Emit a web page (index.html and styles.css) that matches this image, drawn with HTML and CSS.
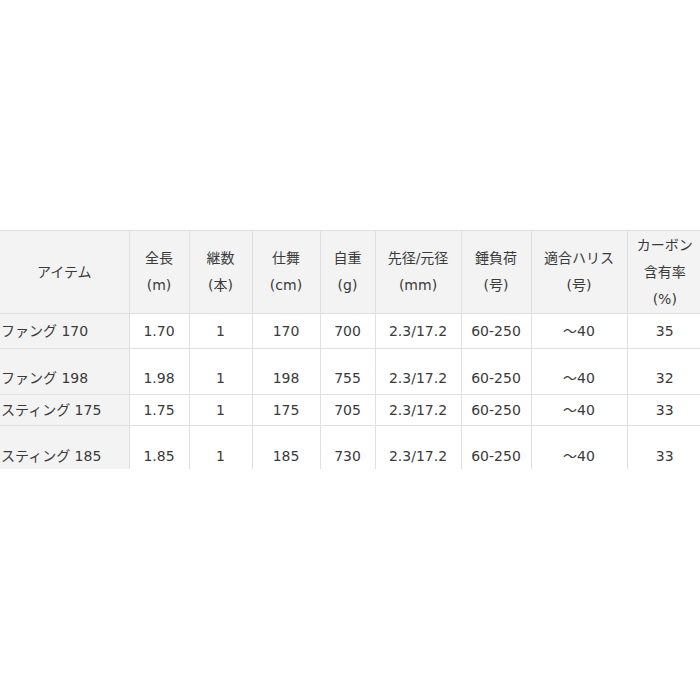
FILE: index.html
```html
<!DOCTYPE html>
<html lang="ja">
<head>
<meta charset="utf-8">
<title>スペック</title>
<link rel="stylesheet" href="styles.css">
</head>
<body>
<div class="wrap">
<table class="spec">
  <colgroup>
    <col class="c-item"><col class="c-len"><col class="c-pcs"><col class="c-close"><col class="c-wt"><col class="c-dia"><col class="c-load"><col class="c-line"><col class="c-carbon">
  </colgroup>
  <thead>
    <tr>
      <th>アイテム</th>
      <th>全長<br>(m)</th>
      <th>継数<br>(本)</th>
      <th>仕舞<br>(cm)</th>
      <th>自重<br>(g)</th>
      <th>先径/元径<br>(mm)</th>
      <th>錘負荷<br>(号)</th>
      <th>適合ハリス<br>(号)</th>
      <th>カーボン<br>含有率<br>(%)</th>
    </tr>
  </thead>
  <tbody>
    <tr class="r1">
      <td class="name">ファング 170</td><td>1.70</td><td>1</td><td>170</td><td>700</td><td>2.3/17.2</td><td>60-250</td><td>～40</td><td>35</td>
    </tr>
    <tr class="r2">
      <td class="name">ファング 198</td><td>1.98</td><td>1</td><td>198</td><td>755</td><td>2.3/17.2</td><td>60-250</td><td>～40</td><td>32</td>
    </tr>
    <tr class="r3">
      <td class="name">スティング 175</td><td>1.75</td><td>1</td><td>175</td><td>705</td><td>2.3/17.2</td><td>60-250</td><td>～40</td><td>33</td>
    </tr>
    <tr class="r4">
      <td class="name">スティング 185</td><td>1.85</td><td>1</td><td>185</td><td>730</td><td>2.3/17.2</td><td>60-250</td><td>～40</td><td>33</td>
    </tr>
  </tbody>
</table>
</div>
</body>
</html>
```
FILE: styles.css
```css
html, body {
  margin: 0;
  padding: 0;
  background: #ffffff;
}
body {
  width: 700px;
  height: 700px;
  overflow: hidden;
}
.wrap {
  padding-top: 230px;
}
.spec {
  width: 702px;
  table-layout: fixed;
  border-collapse: collapse;
  font-family: "DejaVu Sans", "Noto Sans CJK JP", sans-serif;
  font-size: 14px;
  color: #3a3a3a;
}
.c-item { width: 129px; }
.c-len { width: 60px; }
.c-pcs { width: 63px; }
.c-close { width: 68px; }
.c-wt { width: 55px; }
.c-dia { width: 86px; }
.c-load { width: 70px; }
.c-line { width: 96px; }
.c-carbon { width: 75px; }

.spec th,
.spec td {
  border: 1px solid #e0e0e0;
  text-align: center;
  font-weight: normal;
  white-space: nowrap;
}
.spec th:first-child,
.spec td:first-child {
  border-left: none;
}
.spec th:last-child,
.spec td:last-child {
  border-right: none;
}
.spec thead th {
  background: #f3f3f3;
  line-height: 27px;
  padding: 0;
  height: 83px;
  box-sizing: border-box;
}
.spec td {
  line-height: 20px;
  padding: 0;
}
.spec td.name {
  background: #f3f3f3;
  text-align: left;
  padding-left: 1px;
}
.spec tbody tr:last-child td {
  border-bottom: none;
}
.r1 td { padding-top: 7px; padding-bottom: 7px; }
.r2 td { padding-top: 19px; padding-bottom: 6px; }
.r3 td { padding-top: 5px; padding-bottom: 5px; }
.r4 td { padding-top: 20px; padding-bottom: 3px; }
```
